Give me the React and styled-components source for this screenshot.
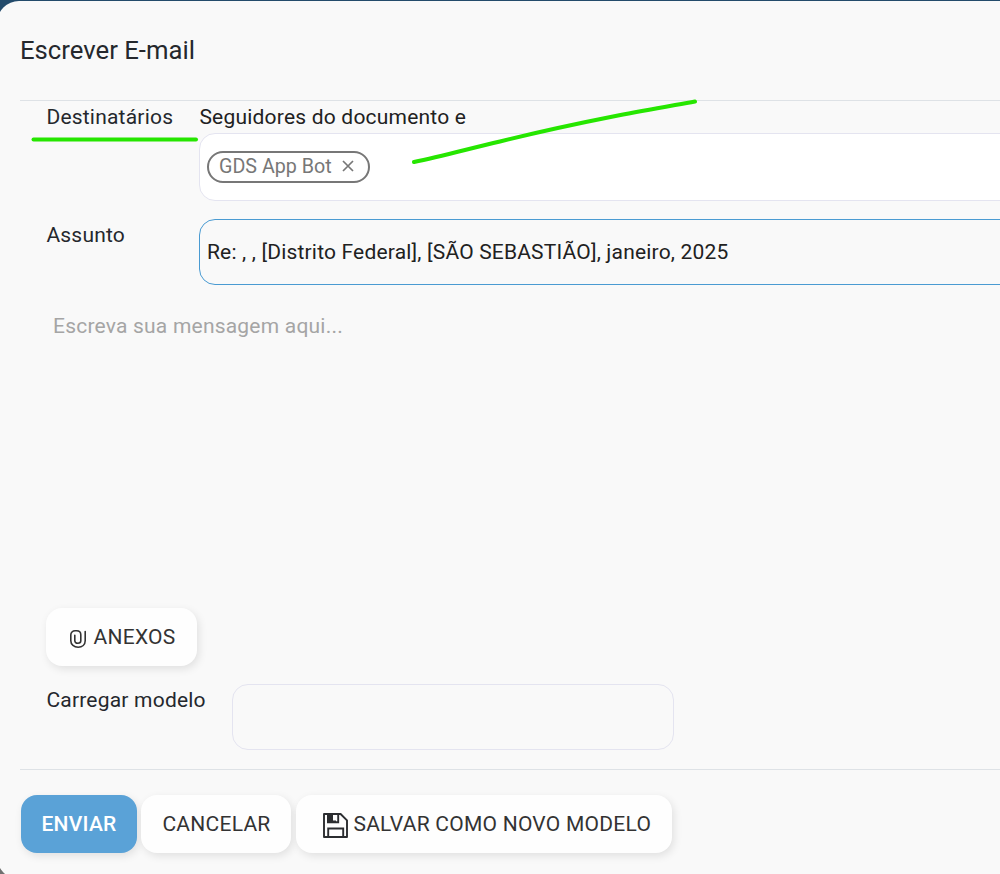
import React from "react";
import styled, { createGlobalStyle } from "styled-components";

const GlobalStyle = createGlobalStyle`
  *, *::before, *::after { box-sizing: border-box; }
  html, body { margin: 0; height: 100%; overflow: hidden; }
  body { font-family: Roboto, "Liberation Sans", sans-serif; color: #25282d; }
`;

const Backdrop = styled.div`
  height: 874px;
  overflow: hidden;
  padding-top: 1px;
  background: linear-gradient(#234b6b 0 50%, #707070 50%);
`;

const Dialog = styled.section`
  display: flex;
  flex-direction: column;
  width: 1060px;
  height: 878px;
  margin-left: -3px;
  padding-left: 23px;
  border-radius: 22px;
  background: #f9f9f9;
`;

const Header = styled.header`
  display: flex;
  align-items: center;
  height: 100px;
  padding-bottom: 2px;
  border-bottom: 1px solid #dee2e6;
`;

const Title = styled.h4`
  margin: 0;
  font-size: 25.7px;
  line-height: 36px;
  font-weight: 400;
`;

const Body = styled.main`
  display: flex;
  flex-direction: column;
  height: 668px;
  padding-left: 26px;
`;

const FieldRow = styled.div`
  display: grid;
  grid-template-columns: ${(p) => p.$label || "153px"} ${(p) => p.$field || "1fr"};
  margin-bottom: ${(p) => p.$gap || "0"};
`;

const Text = styled.span`
  font-size: ${(p) => p.$size || "21px"};
  line-height: 32px;
  letter-spacing: ${(p) => p.$tracking || "0.21px"};
  white-space: pre;
  color: ${(p) => p.$color || "#25282d"};
`;

const Label = styled(Text)`
  padding-left: 0.4px;
`;

const Stack = styled.div`
  display: flex;
  flex-direction: column;
`;

const Field = styled.div`
  display: flex;
  align-items: center;
  height: ${(p) => p.$height || "66px"};
  padding: 0 7px;
  border: 1px solid ${(p) => (p.$active ? "#4a9bd2" : "#e4e4f0")};
  border-radius: 16px;
  background: ${(p) => p.$fill || "transparent"};
`;

const Tag = styled.span`
  display: flex;
  align-items: center;
  gap: 10.5px;
  width: 163px;
  height: 32px;
  padding-left: 10px;
  border: 2px solid #777;
  border-radius: 16px;
  color: #777;
`;

const Message = styled.div`
  height: 298px;
  padding: 0 7px;
`;

const Button = styled.button`
  display: flex;
  align-items: center;
  justify-content: center;
  flex: none;
  gap: ${(p) => p.$gap || "0"};
  width: ${(p) => p.$width};
  height: 58px;
  padding: 0 0 0 ${(p) => p.$shift || "0"};
  border: 0;
  border-radius: 16px;
  background: ${(p) => (p.$primary ? "#5aa2d7" : "#fefefe")};
  color: ${(p) => (p.$primary ? "#fff" : "#333")};
  font: ${(p) => (p.$primary ? 500 : 400)} 21px/32px Roboto, "Liberation Sans", sans-serif;
  letter-spacing: 0.25px;
  white-space: nowrap;
  box-shadow: 2px 3px 8px rgba(0, 0, 0, 0.1);
`;

const Footer = styled.footer`
  display: flex;
  padding: 25px 0 0 1px;
  border-top: 1px solid #dee2e6;
`;

const Spacer = styled.div`
  width: ${(p) => p.$width || "0"};
  height: ${(p) => p.$height || "0"};
  flex: none;
`;

const Marks = styled.svg`
  position: absolute;
  top: 90px;
  left: 20px;
  pointer-events: none;
`;

const IconSvg = styled.svg`
  flex: none;
  margin-top: ${(p) => p.$drop || "0"};
  margin-bottom: ${(p) => p.$lift || "0"};
`;

function ClipIcon() {
  return (
    <IconSvg $drop="3px" width="16" height="18" viewBox="0 0 16 18" fill="none" stroke="#333" strokeWidth="1.6" strokeLinecap="round">
      <path d="M15.2 1.6V10.800C15.200 14.700 12.200 17.200 8.200 17.200C4 17.200.8 14.700.8 10.800V5C.8 2.500 2.500.8 5.200.8H6.600C9.200.8 10.800 2.300 10.800 4.700V10.800C10.800 12.500 9.700 13.300 7.900 13.300C5.900 13.300 4.800 12.400 4.800 10.600V5.300" />
    </IconSvg>
  );
}

function SaveIcon() {
  return (
    <IconSvg $drop="2px" width="25" height="25" viewBox="0 0 25 25" fill="none" stroke="#2b2d30" strokeWidth="1.9">
      <path d="M1 1h16.600L24 7.400V24H1Z" strokeLinejoin="round" />
      <path d="M5.200 24v-8.500h15V24M15.200 1v8.300H4" />
      <path d="M4 1h6v6.500h3V10H4Z" fill="#2b2d30" stroke="none" />
    </IconSvg>
  );
}

function CloseIcon() {
  return (
    <IconSvg $lift="2px" width="12" height="12" viewBox="0 0 12 12" stroke="#777" strokeWidth="1.7">
      <path d="M1 1l10 10M11 1L1 11" />
    </IconSvg>
  );
}

export default function App() {
  return (
    <Backdrop>
      <GlobalStyle />
      <Dialog>
        <Header>
          <Title>Escrever E-mail</Title>
        </Header>
        <Body>
          <FieldRow $gap="18px">
            <Label>Destinatários</Label>
            <Stack>
              <Label $color="#212121">Seguidores do documento e</Label>
              <Field $height="68px" $fill="#fff">
                <Tag>
                  <Text $color="#777" $size="19.7px" $tracking="0">GDS App Bot</Text>
                  <CloseIcon />
                </Tag>
              </Field>
            </Stack>
          </FieldRow>
          <FieldRow $gap="25px">
            <Label>Assunto</Label>
            <Field $active>
              <Text $color="#212121" $tracking="0.18px">Re: , , [Distrito Federal], [SÃO SEBASTIÃO], janeiro, 2025</Text>
            </Field>
          </FieldRow>
          <Message>
            <Text $color="#a5a5a5">Escreva sua mensagem aqui...</Text>
          </Message>
          <Button $width="151px" $gap="8px" $shift="2px">
            <ClipIcon />
            ANEXOS
          </Button>
          <Spacer $height="18px" />
          <FieldRow $label="186px" $field="442px">
            <Label>Carregar modelo</Label>
            <Field />
          </FieldRow>
        </Body>
        <Footer>
          <Button $primary $width="116px">ENVIAR</Button>
          <Spacer $width="4px" />
          <Button $width="150px" $shift="1px">CANCELAR</Button>
          <Spacer $width="5px" />
          <Button $width="376px" $gap="5.5px" $shift="6px">
            <SaveIcon />
            SALVAR COMO NOVO MODELO
          </Button>
        </Footer>
      </Dialog>
      <Marks width="690" height="80" viewBox="20 90 690 80" fill="none" stroke="#26e600" strokeWidth="4" strokeLinecap="round">
        <path d="M33.5 139.5H196" />
        <path d="M414 162C442 156 470 148.500 500 141.500C540 131.500 580 123 618 115.500C644 110.500 670 106 695 101.500" />
      </Marks>
    </Backdrop>
  );
}
